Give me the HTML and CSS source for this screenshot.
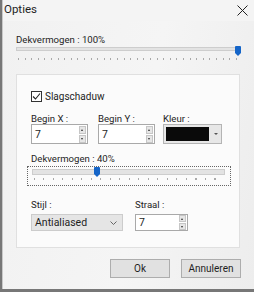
FILE: index.html
```html
<!DOCTYPE html>
<html lang="nl">
<head>
    <meta charset="UTF-8">
    <title>Opties</title>
    <link rel="stylesheet" href="styles.css">
</head>
<body>
    <div class="window">
        <div class="titlebar">
            <span class="title">Opties</span>
            <svg class="close" width="11" height="11" viewBox="0 0 11 11">
                <path d="M0.5 0.5 L10.5 10.5 M10.5 0.5 L0.5 10.5" stroke="#222" stroke-width="1"/>
            </svg>
        </div>

        <div class="content">
            <div class="label top-label">Dekvermogen : 100%</div>
            <div class="slider wide">
                <div class="track"></div>
                <div class="thumb" style="left: 219px"></div>
                <div class="ticks"></div>
            </div>

            <div class="panel">
                <label class="check">
                    <span class="box">
                        <svg width="9" height="9" viewBox="0 0 9 9">
                            <path d="M1 4.5 L3.5 7 L8 1.5" fill="none" stroke="#222" stroke-width="1.1"/>
                        </svg>
                    </span>
                    Slagschaduw
                </label>

                <div class="row fields">
                    <div class="field">
                        <div class="label">Begin X :</div>
                        <div class="spin">
                            <span class="value">7</span>
                            <span class="arrows"><i class="up"></i><i class="down"></i></span>
                        </div>
                    </div>
                    <div class="field">
                        <div class="label">Begin Y :</div>
                        <div class="spin">
                            <span class="value">7</span>
                            <span class="arrows"><i class="up"></i><i class="down"></i></span>
                        </div>
                    </div>
                    <div class="field">
                        <div class="label">Kleur :</div>
                        <div class="color">
                            <span class="swatch"></span>
                            <span class="drop"><i></i></span>
                        </div>
                    </div>
                </div>

                <div class="label opacity-label">Dekvermogen : 40%</div>
                <div class="focus-box">
                    <div class="slider narrow">
                        <div class="track"></div>
                        <div class="thumb" style="left: 62px"></div>
                        <div class="ticks"></div>
                    </div>
                </div>

                <div class="row bottom-fields">
                    <div class="field">
                        <div class="label">Stijl :</div>
                        <div class="select">
                            <span>Antialiased</span>
                            <svg width="7" height="4" viewBox="0 0 7 4">
                                <path d="M0.5 0.5 L3.5 3.5 L6.5 0.5" fill="none" stroke="#666" stroke-width="1"/>
                            </svg>
                        </div>
                    </div>
                    <div class="field">
                        <div class="label">Straal :</div>
                        <div class="spin small">
                            <span class="value">7</span>
                            <span class="arrows"><i class="up"></i><i class="down"></i></span>
                        </div>
                    </div>
                </div>
            </div>

            <div class="buttons">
                <button class="btn">Ok</button>
                <button class="btn">Annuleren</button>
            </div>
        </div>
    </div>
</body>
</html>
```

FILE: styles.css
```css
html, body {
    margin: 0;
    padding: 0;
}

body {
    width: 254px;
    height: 292px;
    overflow: hidden;
    font-family: Roboto, "Liberation Sans", sans-serif;
    font-size: 9.6px;
    color: #1e1e1e;
    background: #777;
}

.window {
    width: 252px;
    height: 289px;
    margin-left: 2px;
    background: linear-gradient(100deg, #f1f1f1 0%, #f5f5f5 55%, #ededed 100%);
    border-left: 1px solid #c8c8c8;
    box-sizing: border-box;
}

.titlebar {
    height: 21px;
    display: flex;
    align-items: flex-start;
    justify-content: space-between;
    padding: 3px 6px 0 1px;
    box-sizing: border-box;
    background: #f4f4f4;
}

.title {
    font-size: 11.5px;
    line-height: 12px;
}

.close {
    margin-top: 2px;
}

.content {
    padding: 0 13px;
}

.label {
    line-height: 11px;
    white-space: nowrap;
}

.top-label {
    margin-top: 13px;
}

.slider {
    position: relative;
    height: 17px;
}

.slider.wide {
    width: 224px;
}

.slider.narrow {
    width: 193px;
}

.track {
    position: absolute;
    left: 0;
    right: 0;
    top: 2px;
    height: 2px;
    background: #e3e3e3;
    border: 1px solid #cdcdcd;
}

.narrow .track {
    height: 4px;
}

.thumb {
    position: absolute;
    top: 1px;
    width: 6px;
    height: 7px;
    background: #1565c8;
    border-radius: 1px 1px 0 0;
}

.narrow .thumb {
    top: 0;
}

.thumb::after {
    content: "";
    position: absolute;
    top: 7px;
    left: 0;
    border-left: 3px solid transparent;
    border-right: 3px solid transparent;
    border-top: 3px solid #1565c8;
}

.ticks {
    position: absolute;
    left: 2px;
    right: 2px;
    top: 13px;
    height: 2px;
    background: repeating-linear-gradient(90deg, #a9a9a9 0, #a9a9a9 1px, transparent 1px, transparent 6.6px);
}

.narrow .ticks {
    top: 11px;
    background: repeating-linear-gradient(90deg, #a9a9a9 0, #a9a9a9 1px, transparent 1px, transparent 9.5px);
}

.panel {
    margin-top: 12px;
    width: 224px;
    height: 174px;
    box-sizing: border-box;
    background: #fbfbfb;
    border: 1px solid #e0e0e0;
    padding: 16px 0 0 14px;
}

.check {
    display: flex;
    align-items: center;
    gap: 3px;
    line-height: 11px;
    height: 11px;
    font-size: 10px;
}

.box {
    width: 9px;
    height: 9px;
    border: 1px solid #333;
    background: #fff;
    display: flex;
}

.row {
    display: flex;
}

.fields {
    margin-top: 11px;
    gap: 10px;
}

.fields .field:last-child {
    margin-left: -2px;
}

.spin {
    width: 57px;
    height: 20px;
    box-sizing: border-box;
    border: 1px solid #a9a9a9;
    background: #fff;
    display: flex;
    justify-content: space-between;
    align-items: center;
    padding: 0 1px 0 3px;
    font-size: 10.5px;
}

.spin.small {
    width: 53px;
    height: 17px;
}

.arrows {
    display: flex;
    flex-direction: column;
    gap: 1px;
}

.arrows i {
    width: 7px;
    height: 8px;
    box-sizing: border-box;
    background: #e6e6e6;
    border: 1px solid #c6c6c6;
    position: relative;
}

.small .arrows i {
    height: 7px;
}

.arrows i::after {
    content: "";
    position: absolute;
    left: 1px;
    top: 2px;
    border-left: 1.5px solid transparent;
    border-right: 1.5px solid transparent;
}

.arrows .up::after {
    border-bottom: 2px solid #333;
}

.arrows .down::after {
    border-top: 2px solid #333;
}

.color {
    width: 59px;
    height: 20px;
    box-sizing: border-box;
    border: 1px solid #b4b4b4;
    background: #e7e7e7;
    display: flex;
    align-items: center;
    padding: 0 2px;
    gap: 5px;
}

.swatch {
    width: 43px;
    height: 14px;
    background: #0a0a0a;
}

.drop i {
    display: block;
    border-left: 2px solid transparent;
    border-right: 2px solid transparent;
    border-top: 2px solid #555;
}

.opacity-label {
    margin-top: 9px;
}

.focus-box {
    width: 204px;
    height: 20px;
    box-sizing: border-box;
    border: 1px dotted #666;
    padding: 0 0 0 4px;
    margin: 2px 0 0 -4px;
}

.bottom-fields {
    margin-top: 13px;
    gap: 12px;
}

.bottom-fields .label {
    margin-bottom: 4px;
}

.select {
    width: 92px;
    height: 17px;
    box-sizing: border-box;
    border: 1px solid #cccccc;
    background: #e5e5e5;
    display: flex;
    align-items: center;
    justify-content: space-between;
    padding: 0 5px 0 3px;
    font-size: 10.5px;
}

.buttons {
    display: flex;
    justify-content: flex-end;
    gap: 11px;
    margin-top: 11px;
}

.btn {
    height: 19px;
    width: 60px;
    padding: 0;
    font-family: Roboto, "Liberation Sans", sans-serif;
    font-size: 10px;
    color: #1e1e1e;
    background: #e1e1e1;
    border: 1px solid #adadad;
}
```
